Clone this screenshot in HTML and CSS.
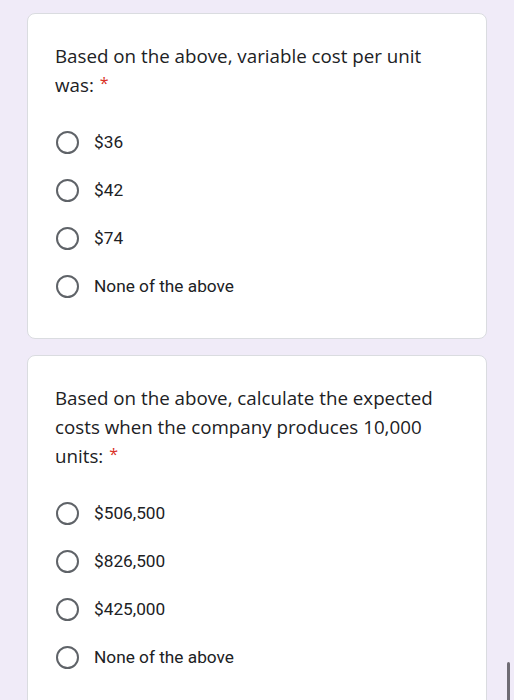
FILE: index.html
```html
<!DOCTYPE html>
<html>
<head>
<meta charset="utf-8">
<link rel="stylesheet" href="styles.css">
</head>
<body>
<div class="page">
  <div class="card">
    <div class="title">Based on the above, variable cost per unit was:<span class="req">*</span></div>
    <div class="options">
      <div class="opt"><span class="radio"></span><span class="label">$36</span></div>
      <div class="opt"><span class="radio"></span><span class="label">$42</span></div>
      <div class="opt"><span class="radio"></span><span class="label">$74</span></div>
      <div class="opt"><span class="radio"></span><span class="label">None of the above</span></div>
    </div>
  </div>
  <div class="card">
    <div class="title">Based on the above, calculate the expected costs when the company produces 10,000 units:<span class="req">*</span></div>
    <div class="options">
      <div class="opt"><span class="radio"></span><span class="label">$506,500</span></div>
      <div class="opt"><span class="radio"></span><span class="label">$826,500</span></div>
      <div class="opt"><span class="radio"></span><span class="label">$425,000</span></div>
      <div class="opt"><span class="radio"></span><span class="label">None of the above</span></div>
    </div>
  </div>
</div>
<div class="scrollbar"></div>
</body>
</html>
```

FILE: styles.css
```css
html, body {
  margin: 0;
  padding: 0;
  background: #f0ebf8;
  height: 100%;
  overflow: hidden;
}
.page {
  padding: 13px 0 0 27px;
  display: flex;
  flex-direction: column;
  gap: 16px;
}
.card {
  width: 460px;
  box-sizing: border-box;
  background: #ffffff;
  border: 1px solid #dadce0;
  border-radius: 8px;
  padding: 27px 27px 28px 27px;
}
.title {
  font-family: "Open Sans", sans-serif;
  font-size: 18.75px;
  line-height: 29px;
  color: #202124;
  width: 404px;
}
.req {
  display: inline-block;
  margin-left: 6px;
  color: #d93025;
  font-size: 16px;
  line-height: 16px;
  vertical-align: 3px;
}
.options {
  margin-top: 19px;
  display: flex;
  flex-direction: column;
}
.opt {
  height: 48px;
  display: flex;
  align-items: center;
}
.radio {
  width: 23px;
  height: 23px;
  box-sizing: border-box;
  border: 2px solid #5f6368;
  border-radius: 50%;
  margin-left: 1px;
  flex: none;
}
.label {
  margin-left: 15px;
  font-family: Roboto, sans-serif;
  font-size: 17.25px;
  color: #202124;
}
.scrollbar {
  position: absolute;
  left: 507px;
  top: 662px;
  width: 3px;
  height: 40px;
  background: #6f6c74;
  border-radius: 2px;
}
```
